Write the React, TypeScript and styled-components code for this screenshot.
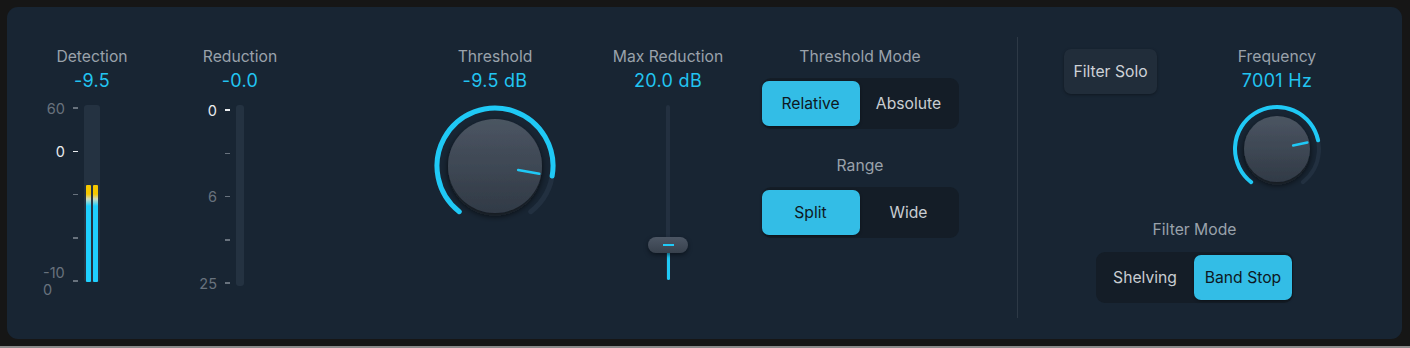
import React from 'react'
import styled, { createGlobalStyle } from 'styled-components'

const GlobalStyle = createGlobalStyle`
  html, body {
    margin: 0;
    padding: 0;
    background: #161616;
  }
  body {
    font-family: Inter, "Noto Sans", "Liberation Sans", sans-serif;
  }
`

const Page = styled.div`
  width: 1410px;
  height: 348px;
  box-sizing: border-box;
  padding: 7px 8px 0 7px;
  border-bottom: 2px solid #8b8b8b;
`

const Panel = styled.div`
  height: 332px;
  box-sizing: border-box;
  background: #182533;
  border-radius: 11px;
  display: flex;
  align-items: stretch;
  padding: 40px 0 21px 0;
`

const Column = styled.div<{ $w: number; $ml: number }>`
  width: ${p => p.$w}px;
  margin-left: ${p => p.$ml}px;
  display: flex;
  flex-direction: column;
  align-items: center;
  flex-shrink: 0;
`

const Label = styled.div<{ $mt?: number }>`
  font-size: 15.7px;
  line-height: 20px;
  color: #9aa2ab;
  white-space: nowrap;
  margin-top: ${p => p.$mt || 0}px;
`

const Value = styled.div`
  font-size: 18px;
  line-height: 20px;
  letter-spacing: 0.3px;
  margin-top: 4px;
  color: #22c4f1;
  white-space: nowrap;
`

/* ---------- meters ---------- */

const MeterArea = styled.div`
  margin-top: 10px;
  width: 100%;
  display: grid;
  grid-template-columns: 1fr auto 1fr;
  align-items: start;
`

const Scale = styled.div<{ $h: number; $mt: number }>`
  grid-column: 1;
  justify-self: end;
  height: ${p => p.$h}px;
  margin-top: ${p => p.$mt}px;
  margin-right: 6px;
  display: flex;
  flex-direction: column;
  justify-content: space-between;
  align-items: flex-end;
`

const Tick = styled.div<{ $bright?: boolean }>`
  height: 14px;
  display: flex;
  align-items: center;
  gap: 8px;
  font-size: 14.5px;
  line-height: 17px;
  color: ${p => (p.$bright ? '#e9ecef' : '#68727d')};
  &::after {
    content: '';
    width: 5px;
    height: 1.5px;
    background: ${p => (p.$bright ? '#e9ecef' : '#68727d')};
  }
`

const Wrapped = styled.span`
  width: 23px;
  text-align: left;
  word-break: break-all;
  margin-right: -1px;
`

const MeterTrack = styled.div<{ $w: number; $h: number }>`
  grid-column: 2;
  margin-top: 4px;
  width: ${p => p.$w}px;
  height: ${p => p.$h}px;
  border-radius: 3px;
  background: #243241;
  display: flex;
  align-items: flex-end;
  justify-content: center;
  gap: 2px;
`

const MeterBar = styled.div`
  width: 5px;
  border-radius: 1px;
  background: linear-gradient(
    to bottom,
    #f6c800 0px,
    #f6c800 9px,
    #cfdcc0 14px,
    #1fd0ff 21px,
    #1fd0ff 100%
  );
`

/* ---------- knob ---------- */

const KnobSvg = styled.svg`
  margin-top: 10px;
  display: block;
  overflow: visible;
`

function polar(cx: number, cy: number, r: number, deg: number) {
  const a = ((deg - 90) * Math.PI) / 180
  return [cx + r * Math.cos(a), cy + r * Math.sin(a)]
}

function arc(cx: number, cy: number, r: number, a1: number, a2: number) {
  const [x1, y1] = polar(cx, cy, r, a1)
  const [x2, y2] = polar(cx, cy, r, a2)
  const large = a2 - a1 > 180 ? 1 : 0
  return `M ${x1} ${y1} A ${r} ${r} 0 ${large} 1 ${x2} ${y2}`
}

type KnobProps = { id: string; size: number; ringR: number; ring: number; bodyR: number; angle: number }

const Knob: React.FC<KnobProps> = ({ id, size, ringR, ring, bodyR, angle }) => {
  const c = size / 2
  const [px1, py1] = polar(c, c, bodyR * 0.5, angle)
  const [px2, py2] = polar(c, c, bodyR - 2, angle)
  return (
    <KnobSvg width={size} height={size} viewBox={`0 0 ${size} ${size}`}>
      <defs>
        <linearGradient id={`${id}-body`} x1="0" y1="0" x2="0" y2="1">
          <stop offset="0" stopColor="#4b5562" />
          <stop offset="1" stopColor="#313a46" />
        </linearGradient>
        <filter id={`${id}-sh`} x="-30%" y="-30%" width="160%" height="160%">
          <feDropShadow dx="0" dy="3" stdDeviation="3" floodColor="#0a1018" floodOpacity="0.7" />
        </filter>
      </defs>
      <path d={arc(c, c, ringR, -142, 142)} stroke="#223040" strokeWidth={ring} fill="none" strokeLinecap="round" />
      <path d={arc(c, c, ringR, -142, angle)} stroke="#1fc9f6" strokeWidth={ring} fill="none" strokeLinecap="round" />
      <circle cx={c} cy={c} r={bodyR} fill={`url(#${id}-body)`} filter={`url(#${id}-sh)`} />
      <line x1={px1} y1={py1} x2={px2} y2={py2} stroke="#1fc9f6" strokeWidth={2.5} strokeLinecap="round" />
    </KnobSvg>
  )
}

/* ---------- slider ---------- */

const SliderTrack = styled.div`
  margin-top: 14px;
  width: 4px;
  height: 175px;
  border-radius: 2px;
  background: #233040;
  display: flex;
  flex-direction: column;
  align-items: center;
  justify-content: flex-end;
`

const SliderFill = styled.div`
  width: 3px;
  border-radius: 1.5px;
  background: #1fc9f6;
  display: flex;
  flex-direction: column;
  align-items: center;
`

const Thumb = styled.div`
  flex-shrink: 0;
  width: 40px;
  height: 16px;
  margin-top: -8px;
  border-radius: 8px;
  background: linear-gradient(to bottom, #4c5664, #38414d);
  box-shadow: 0 2px 4px rgba(5, 10, 16, 0.6);
  display: flex;
  align-items: center;
  justify-content: center;
  &::after {
    content: '';
    width: 11px;
    height: 2px;
    background: #1fc9f6;
  }
`

/* ---------- buttons ---------- */

const Segmented = styled.div<{ $mt: number }>`
  margin-top: ${p => p.$mt}px;
  width: 197px;
  height: 51px;
  box-sizing: border-box;
  padding: 3px 1px 3px 0;
  border-radius: 9px;
  background: #141d27;
  display: grid;
  grid-template-columns: 1fr 1fr;
`

const SegButton = styled.div<{ $active?: boolean }>`
  border-radius: 7px;
  display: flex;
  align-items: center;
  justify-content: center;
  font-size: 15.7px;
  color: ${p => (p.$active ? '#0e1822' : '#c9cdd2')};
  background: ${p => (p.$active ? '#33bde6' : 'transparent')};
  box-shadow: ${p => (p.$active ? '0 1px 3px rgba(0,0,0,0.4)' : 'none')};
`

const SoloButton = styled.div`
  margin-top: 2px;
  margin-left: 46px;
  width: 93px;
  height: 45px;
  flex-shrink: 0;
  border-radius: 7px;
  background: #212d3a;
  box-shadow: 0 1px 3px rgba(0, 0, 0, 0.35);
  display: flex;
  align-items: center;
  justify-content: center;
  font-size: 15.7px;
  color: #ced2d7;
`

const Divider = styled.div`
  width: 1px;
  margin: -10px 0 0 0;
  background: #2d3946;
  flex-shrink: 0;
`

const RightSection = styled.div`
  display: flex;
  flex-direction: column;
`

const TopRow = styled.div`
  display: flex;
  align-items: flex-start;
`

const FilterModeGroup = styled.div`
  margin: 23px 0 0 78px;
  display: flex;
  flex-direction: column;
  align-items: center;
  width: 197px;
`

const App: React.FC = () => {
  return (
    <>
      <GlobalStyle />
      <Page>
        <Panel>
          <Column $w={100} $ml={35}>
            <Label>Detection</Label>
            <Value>-9.5</Value>
            <MeterArea>
              <Scale $h={187} $mt={0}>
                <Tick>60</Tick>
                <Tick $bright>0</Tick>
                <Tick />
                <Tick />
                <Tick><Wrapped>-100</Wrapped></Tick>
              </Scale>
              <MeterTrack $w={16} $h={177}>
                <MeterBar style={{ height: '55%' }} />
                <MeterBar style={{ height: '55%' }} />
              </MeterTrack>
            </MeterArea>
          </Column>

          <Column $w={100} $ml={48}>
            <Label>Reduction</Label>
            <Value>-0.0</Value>
            <MeterArea>
              <Scale $h={187} $mt={2}>
                <Tick $bright>0</Tick>
                <Tick />
                <Tick>6</Tick>
                <Tick />
                <Tick>25</Tick>
              </Scale>
              <MeterTrack $w={8} $h={181} />
            </MeterArea>
          </Column>

          <Column $w={140} $ml={135}>
            <Label>Threshold</Label>
            <Value>-9.5 dB</Value>
            <Knob id="thr" size={130} ringR={58} ring={5} bodyR={47} angle={100} />
          </Column>

          <Column $w={120} $ml={43}>
            <Label>Max Reduction</Label>
            <Value>20.0 dB</Value>
            <SliderTrack>
              <SliderFill style={{ height: 35 }}>
                <Thumb />
              </SliderFill>
            </SliderTrack>
          </Column>

          <Column $w={200} $ml={32}>
            <Label>Threshold Mode</Label>
            <Segmented $mt={11}>
              <SegButton $active>Relative</SegButton>
              <SegButton>Absolute</SegButton>
            </Segmented>
            <Label $mt={27}>Range</Label>
            <Segmented $mt={11}>
              <SegButton $active>Split</SegButton>
              <SegButton>Wide</SegButton>
            </Segmented>
          </Column>

          <Divider style={{ marginLeft: 57 }} />

          <RightSection>
            <TopRow>
              <SoloButton>Filter Solo</SoloButton>
              <Column $w={120} $ml={60}>
                <Label>Frequency</Label>
                <Value>7001 Hz</Value>
                <Knob id="freq" size={96} ringR={42} ring={4} bodyR={33} angle={78} />
              </Column>
            </TopRow>
            <FilterModeGroup>
              <Label>Filter Mode</Label>
              <Segmented $mt={12}>
                <SegButton>Shelving</SegButton>
                <SegButton $active>Band Stop</SegButton>
              </Segmented>
            </FilterModeGroup>
          </RightSection>
        </Panel>
      </Page>
    </>
  )
}

export default App
